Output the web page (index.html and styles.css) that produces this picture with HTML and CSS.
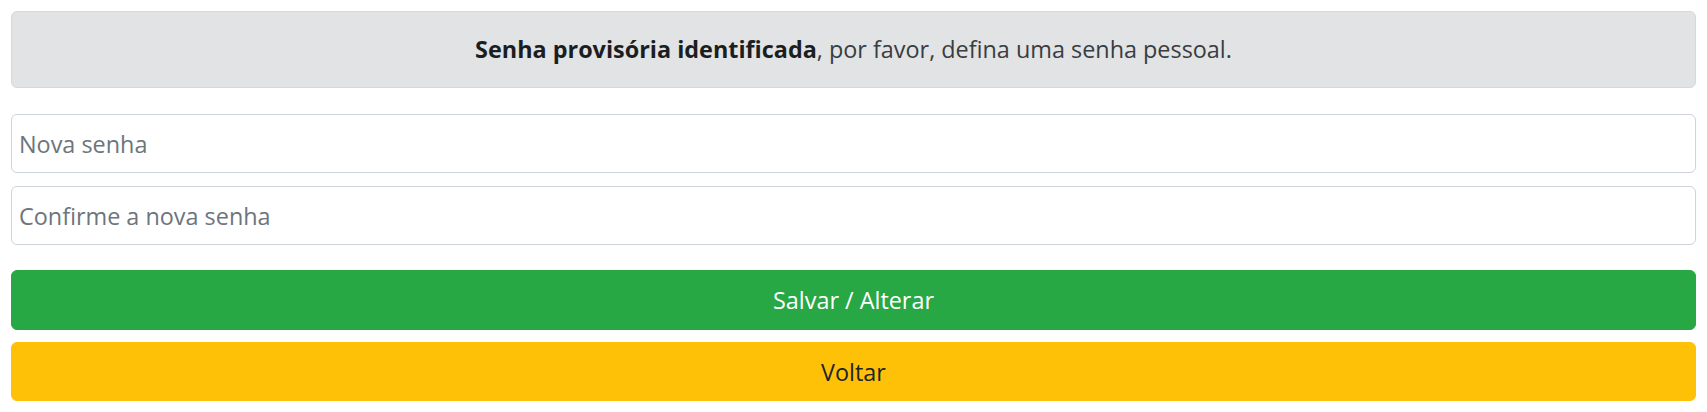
FILE: index.html
```html
<!DOCTYPE html>
<html lang="pt-BR">
<head>
    <meta charset="UTF-8">
    <meta name="viewport" content="width=device-width, initial-scale=1.0">
    <title>Alterar senha</title>
    <link rel="stylesheet" href="styles.css">
</head>
<body>
    <div class="container">
        <div class="alert">
            <strong>Senha provisória identificada</strong>, por favor, defina uma senha pessoal.
        </div>

        <form method="post" action="/senha">
            <div class="form-group">
                <input type="password" name="nova_senha" placeholder="Nova senha">
            </div>
            <div class="form-group">
                <input type="password" name="confirma_senha" placeholder="Confirme a nova senha">
            </div>

            <button type="submit" class="btn btn-success">Salvar / Alterar</button>
            <button type="button" class="btn btn-warning">Voltar</button>
        </form>
    </div>
</body>
</html>
```

FILE: styles.css
```css
* {
    margin: 0;
    padding: 0;
    box-sizing: border-box;
}

body {
    font-family: 'Open Sans', 'Noto Sans', sans-serif;
    font-size: 23.4px;
    line-height: 36px;
    color: #212529;
    background: #fff;
    padding: 11px;
}

.alert {
    background: #e2e3e5;
    border: 1px solid #d6d8db;
    border-radius: 6px;
    color: #383d41;
    text-align: center;
    padding: 19px 30px 20px;
    margin-bottom: 26px;
}

.alert strong {
    font-weight: 700;
    color: #1b1e21;
}

.form-group {
    margin-bottom: 13px;
}

input {
    display: block;
    width: 100%;
    height: 59px;
    padding: 0 7px;
    border: 1px solid #ced4da;
    border-radius: 6px;
    font-family: inherit;
    font-size: 23.4px;
    color: #495057;
    background: #fff;
}

input::placeholder {
    color: #6c757d;
}

input:focus {
    outline: none;
    border-color: #80bdff;
}

form .form-group:last-of-type {
    margin-bottom: 25px;
}

.btn {
    display: block;
    width: 100%;
    border: 1px solid transparent;
    border-radius: 6px;
    font-family: inherit;
    font-size: 23.4px;
    line-height: 36px;
    cursor: pointer;
    text-align: center;
}

.btn-success {
    height: 60px;
    background: #28a745;
    border-color: #28a745;
    color: #fff;
    margin-bottom: 12px;
}

.btn-warning {
    height: 59px;
    background: #ffc107;
    border-color: #ffc107;
    color: #212529;
}
```
